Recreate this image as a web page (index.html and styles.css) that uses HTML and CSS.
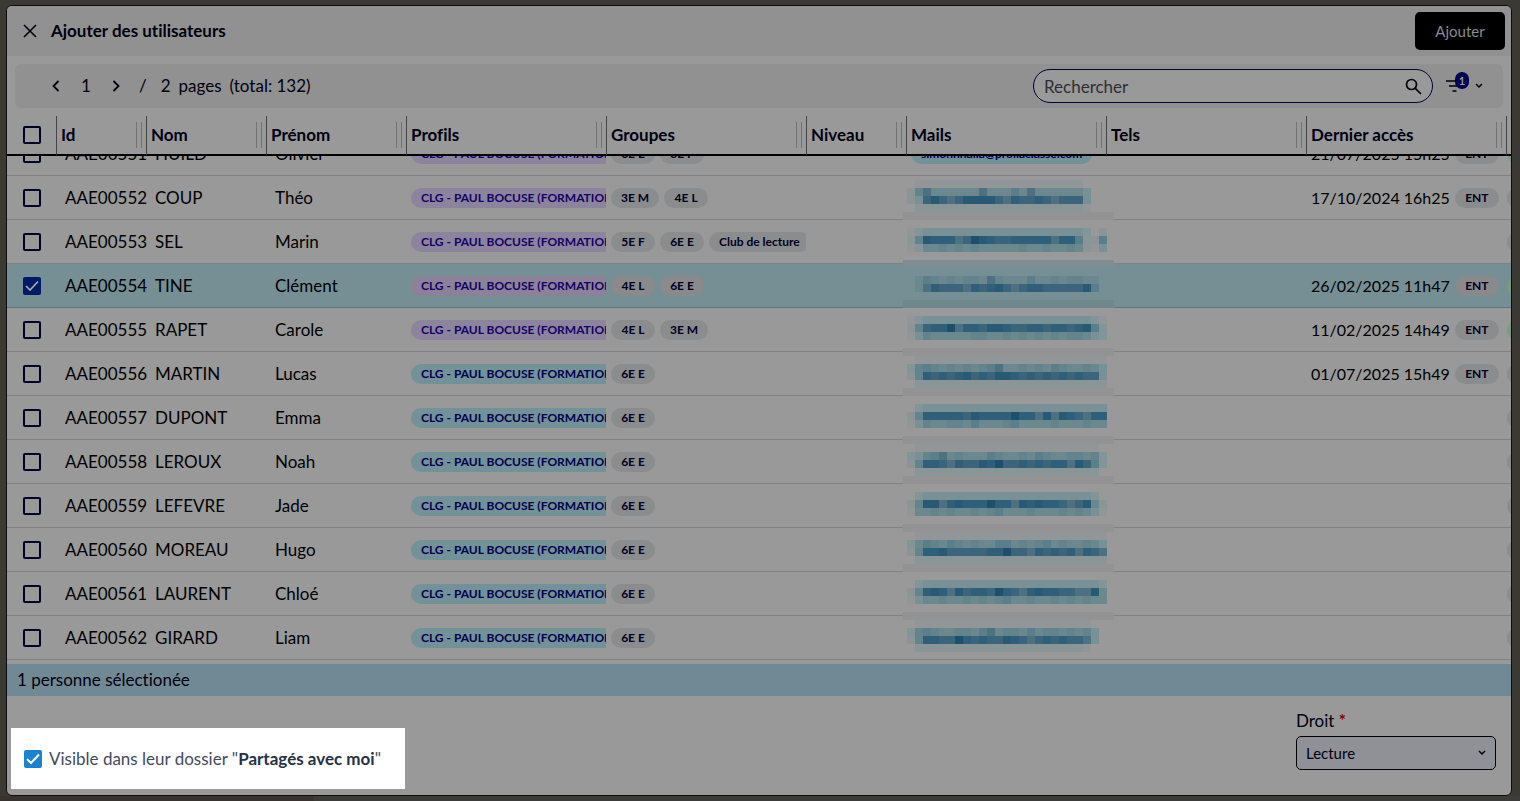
FILE: index.html
```html
<!DOCTYPE html>
<html lang="fr">
<head>
    <meta charset="UTF-8">
    <meta name="viewport" content="width=device-width, initial-scale=1.0">
    <title>Ajouter des utilisateurs</title>
    <link rel="stylesheet" href="styles.css">
</head>
<body>
    <div class="modal">
        <header class="modal-header">
            <button type="button" class="icon-btn" aria-label="Fermer">
                <svg width="14" height="14" viewBox="0 0 14 14"><path d="M1 1l12 12M13 1L1 13" fill="none" stroke="currentColor" stroke-width="1.7"/></svg>
            </button>
            <h1>Ajouter des utilisateurs</h1>
            <button type="button" class="btn-add">Ajouter</button>
        </header>

        <div class="toolbar">
            <nav class="pager">
                <button type="button" class="icon-btn" aria-label="Page précédente">
                    <svg width="8" height="12" viewBox="0 0 8 12"><path d="M6.5 1L1.5 6l5 5" fill="none" stroke="currentColor" stroke-width="1.8"/></svg>
                </button>
                <span class="page-current">1</span>
                <button type="button" class="icon-btn" aria-label="Page suivante">
                    <svg width="8" height="12" viewBox="0 0 8 12"><path d="M1.5 1l5 5-5 5" fill="none" stroke="currentColor" stroke-width="1.8"/></svg>
                </button>
                <span class="page-slash">/</span>
                <span class="page-count">2</span>
                <span>pages</span>
                <span>(total: 132)</span>
            </nav>
            <div class="search">
                <input type="text" placeholder="Rechercher" aria-label="Rechercher">
                <button type="button" class="icon-btn" aria-label="Lancer la recherche">
                    <svg width="17" height="17" viewBox="0 0 17 17"><g fill="none" stroke="currentColor" stroke-width="1.7"><circle cx="6.500" cy="6.500" r="5"/><path d="M10.300 10.300l5.700 5.700"/></g></svg>
                </button>
            </div>
            <button type="button" class="filter-btn" aria-label="Filtres">
                <svg width="17" height="12" viewBox="0 0 17 12"><path d="M0 1h17M3 6h11M6.500 11h4" fill="none" stroke="currentColor" stroke-width="1.600"/></svg>
                <span class="badge">1</span>
                <svg width="8" height="6" viewBox="0 0 8 6"><path d="M1 1l3 3 3-3" fill="none" stroke="currentColor" stroke-width="1.5"/></svg>
            </button>
        </div>

        <div class="table-wrap" id="tableWrap">
            <table class="users">
                <colgroup>
                    <col class="w-check"><col class="w-id"><col class="w-nom"><col class="w-prenom"><col class="w-l"><col class="w-l"><col class="w-niveau"><col class="w-l"><col class="w-l"><col class="w-l"><col class="w-niveau">
                </colgroup>
                <thead>
                    <tr>
                        <th><input type="checkbox" class="check" aria-label="Tout sélectionner"></th>
                        <th><div class="th">Id<i class="grip"></i></div></th>
                        <th><div class="th">Nom<i class="grip"></i></div></th>
                        <th><div class="th">Prénom<i class="grip"></i></div></th>
                        <th><div class="th">Profils<i class="grip"></i></div></th>
                        <th><div class="th">Groupes<i class="grip"></i></div></th>
                        <th><div class="th">Niveau<i class="grip"></i></div></th>
                        <th><div class="th">Mails<i class="grip"></i></div></th>
                        <th><div class="th">Tels<i class="grip"></i></div></th>
                        <th><div class="th">Dernier accès<i class="grip"></i></div></th>
                        <th></th>
                    </tr>
                </thead>
                <tbody id="rows"></tbody>
            </table>
        </div>

        <div class="selection">1 personne sélectionée</div>

        <footer class="modal-footer">
            <label class="visible-option">
                <input type="checkbox" class="check check-blue" checked>
                <span>Visible dans leur dossier "<strong>Partagés avec moi</strong>"</span>
            </label>
            <div class="right-field">
                <label for="droit">Droit <span class="required">*</span></label>
                <div class="select-box">
                    <select id="droit">
                        <option>Lecture</option>
                    </select>
                    <svg width="8" height="6" viewBox="0 0 8 6"><path d="M1 1l3 3 3-3" fill="none" stroke="currentColor" stroke-width="1.5"/></svg>
                </div>
            </div>
        </footer>
    </div>

    <script src="script.js"></script>
</body>
</html>
```
FILE: styles.css
```css
* {
    box-sizing: border-box;
}

body {
    margin: 0;
    height: 100vh;
    padding: 5px 8px 5px 6px;
    background: #3b3934 linear-gradient(90deg, #38332e 314px, #3c3c3b 314px) bottom / 100% 5px no-repeat;
    font-family: Lato, "Liberation Sans", sans-serif;
    font-size: 17px;
    font-variant-ligatures: none;
    line-height: 20px;
    color: #00000f;
}

button,
input,
select {
    font-family: inherit;
    color: inherit;
    margin: 0;
}

.modal {
    height: 100%;
    display: flex;
    flex-direction: column;
    background: #999;
    border: 1px solid #0c0c0c;
    border-radius: 6px;
    overflow: hidden;
}

.icon-btn {
    display: flex;
    padding: 0;
    border: none;
    background: none;
}

/* header */
.modal-header {
    display: flex;
    align-items: center;
    gap: 14px;
    height: 50px;
    padding: 0 6px 0 16px;
    background: #919191;
}

.modal-header h1 {
    flex: 1;
    margin: 0;
    font-size: 17px;
    font-weight: 700;
}

.btn-add {
    width: 90px;
    height: 38px;
    border: none;
    border-radius: 5px;
    background: #000;
    color: #8a8a8f;
    font-size: 15px;
}

/* toolbar */
.toolbar {
    display: flex;
    align-items: center;
    height: 44px;
    margin: 8px;
    padding: 0 20px 0 37px;
    background: #919191;
    border-radius: 6px;
}

.pager {
    flex: 1;
    display: flex;
    align-items: center;
    gap: 8px;
}

.page-current {
    width: 36px;
    text-align: center;
}

.page-slash {
    padding: 0 6px 0 11px;
}

.search {
    display: flex;
    align-items: center;
    width: 400px;
    height: 34px;
    padding: 0 10px;
    border: 1px solid #000033;
    border-radius: 17px;
    background: #999;
}

.search input {
    flex: 1;
    padding: 0;
    border: none;
    outline: none;
    background: none;
    font-size: 17px;
}

.search input::placeholder {
    color: #2f2f35;
}

.filter-btn {
    position: relative;
    display: flex;
    align-items: center;
    gap: 12px;
    margin-left: 13px;
    padding: 0;
    border: none;
    background: none;
}

.badge {
    position: absolute;
    left: 9px;
    top: -8px;
    width: 14px;
    height: 17px;
    border-radius: 7px;
    background: #000052;
    color: #999;
    font-size: 11px;
    font-weight: 700;
    line-height: 17px;
}

/* table */
.table-wrap {
    flex: 1;
    min-height: 0;
    overflow: hidden;
}

.users {
    width: 1599px;
    table-layout: fixed;
    border-collapse: separate;
    border-spacing: 0;
}

.w-check { width: 49px; }
.w-id { width: 90px; }
.w-nom { width: 120px; }
.w-prenom { width: 140px; }
.w-l { width: 200px; }
.w-niveau { width: 100px; }

.users th {
    position: sticky;
    top: 0;
    z-index: 2;
    height: 40px;
    padding: 0 0 0 4px;
    background: #999;
    border-bottom: 2px solid #000;
    border-left: 1px solid #444;
    text-align: left;
}

.users th:first-child {
    border-left: none;
    padding-left: 16px;
}

.th {
    display: flex;
    align-items: center;
    justify-content: space-between;
}

.grip {
    width: 6px;
    height: 26px;
    margin-right: 4px;
    border: solid #727272;
    border-width: 0 1px;
}

.users td {
    height: 44px;
    padding: 0 0 0 5px;
    border-bottom: 1px solid #828282;
    white-space: nowrap;
    color: #000;
}

.users td:first-child {
    padding-left: 16px;
}

.users td.text {
    padding-left: 9px;
}

.users td.more {
    padding-left: 1px;
}

.selected td {
    background: #758f95;
    border-bottom-color: #5c767d;
}

.cell {
    display: flex;
    align-items: center;
    gap: 5px;
    overflow: hidden;
}

.date {
    font-size: 16px;
}

.pill {
    flex: none;
    height: 20px;
    min-width: 44px;
    padding: 0 10px;
    border-radius: 10px;
    background: #8a8c8e;
    color: #00001c;
    font-size: 12px;
    font-weight: 700;
    text-align: center;
}

.pill-purple {
    background: #8c849c;
    color: #150066;
}

.pill-cyan {
    background: #729198;
    color: #00004d;
}

.pill-green {
    background: #7c9a84;
}

.selected .pill {
    background: #8a8a8c;
}

.selected .pill-purple {
    background: #8b8299;
}

.selected .pill-green {
    background: #7a9980;
}

/* masked mail addresses, drawn over the row borders */
.users td.mail {
    position: relative;
}

.mask {
    position: absolute;
    left: -3px;
    top: 0;
    z-index: 1;
}

/* checkboxes */
.check {
    appearance: none;
    display: block;
    flex: none;
    width: 18px;
    height: 18px;
    border: 2px solid #000022;
    border-radius: 2px;
    background: center / 18px 18px no-repeat;
}

.check:checked {
    border: none;
    background-color: #001a66;
    background-image: url("data:image/svg+xml,%3Csvg xmlns='http://www.w3.org/2000/svg' viewBox='0 0 18 18'%3E%3Cpath d='M3 9l4 4 8-8.500' fill='none' stroke='%23aaaaaa' stroke-width='1.700'/%3E%3C/svg%3E");
}

.check-blue:checked {
    background-color: #1a82cf;
    background-image: url("data:image/svg+xml,%3Csvg xmlns='http://www.w3.org/2000/svg' viewBox='0 0 18 18'%3E%3Cpath d='M3 9l4 4 8-8.500' fill='none' stroke='white' stroke-width='2'/%3E%3C/svg%3E");
}

/* bottom */
.selection {
    margin-top: 4px;
    padding: 6px 10px;
    background: #718995;
}

.modal-footer {
    display: flex;
    justify-content: space-between;
    align-items: flex-end;
    height: 99px;
    padding: 0 15px 6px 4px;
}

.visible-option {
    display: flex;
    align-items: center;
    gap: 7px;
    height: 61px;
    padding: 0 24px 0 13px;
    background: #fff;
    color: #434b5e;
}

.visible-option strong {
    color: #263245;
}

.right-field {
    width: 200px;
    padding-bottom: 19px;
}

.right-field label {
    display: block;
    margin-bottom: 5px;
}

.required {
    color: #8b0000;
    font-weight: 700;
}

.select-box {
    position: relative;
}

.select-box select {
    appearance: none;
    display: block;
    width: 100%;
    height: 34px;
    padding: 0 9px;
    border: 1px solid #000;
    border-radius: 5px;
    background: #909196;
    font-size: 15px;
}

.select-box svg {
    position: absolute;
    right: 10px;
    top: 14px;
    pointer-events: none;
}
```
FILE: script.js
```js
const CLG = 'CLG - PAUL BOCUSE (FORMATION)';

// one letter per 8px square, from darkest to lightest
const SHADES = {
    a: '#1c506c', b: '#285a76', c: '#305f7a', d: '#3c657b', e: '#4d7180', f: '#5b7f8a',
    g: '#63848c', h: '#6b888e', i: '#789196', j: '#829598', k: '#8a9597', l: '#929696'
};

const users = [
    { id: 'AAE00551', nom: 'HUILD', prenom: 'Olivier', profil: 'purple', groupes: ['6E E', '3E F'], mail: 'simonnhaila@prollaclasse.com', acces: '21/07/2025 15h25', more: 'green' },
    { id: 'AAE00552', nom: 'COUP', prenom: 'Théo', profil: 'purple', groupes: ['3E M', '4E L'], acces: '17/10/2024 16h25',
      mask: ['.lllllllllllllllllllll.', 'kgehhhhhhehhhfhehhhhhhi', 'kidbdedbbbbdecddcdedddi', '.kkkkkkkkkkkkkkkkkkkkkl'] },
    { id: 'AAE00553', nom: 'SEL', prenom: 'Marin', profil: 'purple', groupes: ['5E F', '6E E', 'Club de lecture'],
      mask: ['ljiiiiiiiiiiiiiiiiiiiij.k', 'kgbcccedabcddccccceccfkkf', 'ljhhghghghhhhhghhghhghkli'] },
    { id: 'AAE00554', nom: 'TINE', prenom: 'Clément', profil: 'purple', groupes: ['4E L', '6E E'], acces: '26/02/2025 11h47', more: 'green', selected: true,
      mask: ['', '.hfghghggheghhhfhhghgghh', '.hecdddecdcbdedccdddddbf'] },
    { id: 'AAE00555', nom: 'RAPET', prenom: 'Carole', profil: 'purple', groupes: ['4E L', '3E M'], acces: '11/02/2025 14h49', more: 'green',
      mask: ['ljiiiiiiiiiiiiiiiiiiiiijl', 'kgdccaeccdbbcddccdccdcbfj', 'lighhhhhgghhghghghghgghij'] },
    { id: 'AAE00556', nom: 'MARTIN', prenom: 'Lucas', profil: 'cyan', groupes: ['6E E'], acces: '01/07/2025 15h49',
      mask: ['.llllllllllllllllllllllll', 'jgfghghghgfehhghghfghhghi', 'kgcdcdcbdcdbbcdcdcdcdcddi', '.kkkkkkkkkkkkkkkkkkkkkkkk'] },
    { id: 'AAE00557', nom: 'DUPONT', prenom: 'Emma', profil: 'cyan', groupes: ['6E E'],
      mask: ['.jiiiiiiiiiiiiiiiiiiiiiii', 'kgcccccdbccccaccebebcdecc', 'lighhgghfhhhgfhhhhghhhghh'] },
    { id: 'AAE00558', nom: 'LEROUX', prenom: 'Noah', profil: 'cyan', groupes: ['6E E'],
      mask: ['.lllllllllllllllllllllll', 'jigfehghhhfghhghfghhgghgj', 'kgccdecddbcaddcdcdccebdfj', '.kkkkkkkkkkkkkkkkkkkkkkk'] },
    { id: 'AAE00559', nom: 'LEFEVRE', prenom: 'Jade', profil: 'cyan', groupes: ['6E E'],
      mask: ['.jiiiiiiiiiiiiiiiiiiiiij', 'kgbbecbcccaccebcbccdedbhk', 'lhhghghhghgfhhhghhhghghil'] },
    { id: 'AAE00560', nom: 'MOREAU', prenom: 'Hugo', profil: 'cyan', groupes: ['6E E'],
      mask: ['.llllllllllllllllllllllll', 'jhfghfghghhffhghgfhghhghi', 'kgccbdddddccaddecdcdcecde', '.kkkkkkkkkkkkkkkkkkkkkkkk'] },
    { id: 'AAE00561', nom: 'LAURENT', prenom: 'Chloé', profil: 'cyan', groupes: ['6E E'],
      mask: ['.jiiiiiiiiiiiiiiiiiiiiiij', 'kgcbcebdccdacdecbccddeebh', 'lihhghhghghgfhhghhghghghh'] },
    { id: 'AAE00562', nom: 'GIRARD', prenom: 'Liam', profil: 'cyan', groupes: ['6E E'],
      mask: ['.llllllllllllllllllllll', 'jgfghhgghfehgghfhgghghgi', 'kgccddacdcddbcdedcdcddei', '.kkkkkkkkkkkkkkkkkkkkkl'] }
];

const pill = (text, kind) => `<span class="pill pill-${kind}">${text}</span>`;

function drawMask(user, index) {
    // the mosaic grid falls 4px lower every second row
    const top = index % 2 ? 4 : 8;
    const bandY = index % 2 ? 36 : 40;
    const last = index === users.length - 1;
    const band = user.selected ? '#6f888c' : users[index + 1] && users[index + 1].selected ? '#7e8e93' : '#939393';
    let rects = last ? '' : `<rect x="0" y="${bandY}" width="211" height="8" fill="${band}"/>`;
    user.mask.forEach((line, r) => {
        [...line].forEach((c, i) => {
            if (SHADES[c]) {
                rects += `<rect x="${4 + i * 8}" y="${top + r * 8}" width="8" height="8" fill="${SHADES[c]}"/>`;
            }
        });
    });
    return `<svg class="mask" width="211" height="${last ? 40 : 48}" shape-rendering="crispEdges">${rects}</svg>`;
}

document.getElementById('rows').innerHTML = users.map((u, i) => `
    <tr class="${u.selected ? 'selected' : ''}">
        <td><input type="checkbox" class="check" aria-label="${u.prenom} ${u.nom}" ${u.selected ? 'checked' : ''}></td>
        <td class="text">${u.id}</td>
        <td class="text">${u.nom}</td>
        <td class="text">${u.prenom}</td>
        <td><div class="cell">${pill(CLG, u.profil)}</div></td>
        <td><div class="cell">${u.groupes.map(g => pill(g, 'grey')).join('')}</div></td>
        <td></td>
        <td class="mail">${u.mail ? `<div class="cell">${pill(u.mail, 'cyan')}</div>` : drawMask(u, i)}</td>
        <td></td>
        <td>${u.acces ? `<div class="cell"><span class="date">${u.acces}</span>${pill('ENT', 'grey')}</div>` : ''}</td>
        <td class="more"><div class="cell">${pill('', u.more || 'grey')}</div></td>
    </tr>
`).join('');

// list is scrolled to its end
const wrap = document.getElementById('tableWrap');
wrap.scrollTop = wrap.scrollHeight;
```
